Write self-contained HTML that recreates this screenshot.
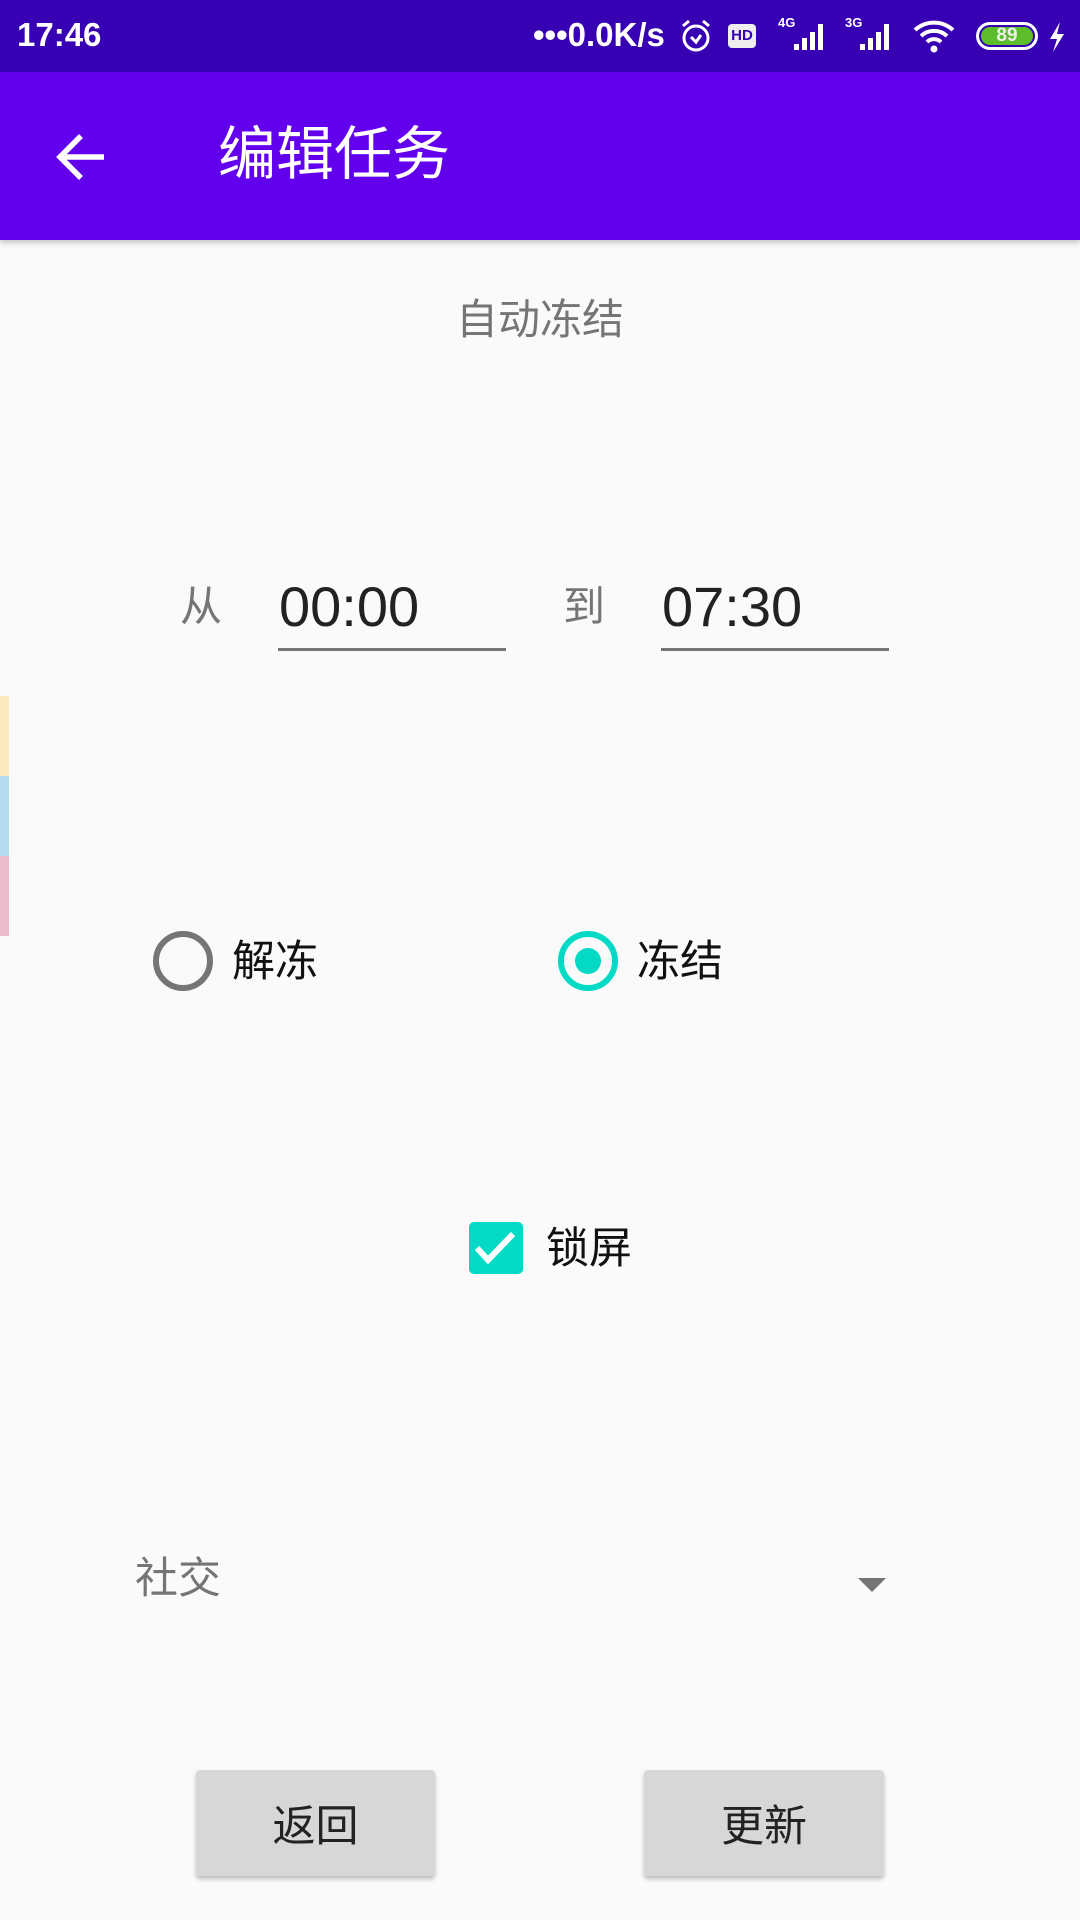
<!DOCTYPE html>
<html><head><meta charset="utf-8"><style>
*{margin:0;padding:0;box-sizing:border-box}
body{width:1080px;height:1920px;background:#FAFAFA;position:relative;overflow:hidden;font-family:"Liberation Sans","Noto Sans CJK SC",sans-serif}
.a{position:absolute;white-space:nowrap}
.sb{left:0;top:0;width:1080px;height:72px;background:#3700B3;color:#fff}
.ab{left:0;top:72px;width:1080px;height:168px;background:#6200EE;box-shadow:0 3px 5px rgba(0,0,0,.2)}
.btn{background:#D6D7D7;border-radius:4px;box-shadow:0 3px 4px rgba(0,0,0,.25);font-size:43px;color:#222;display:flex;align-items:center;justify-content:center}
</style></head><body>
<div class="a sb">
 <div class="a" style="left:17px;top:16px;font-size:33px;font-weight:bold;">17:46</div>
 <div class="a" style="left:533px;top:16px;font-size:33px;font-weight:bold;">•••0.0K/s</div>
 <svg class="a" style="left:678px;top:18px" width="36" height="36" viewBox="0 0 36 36"><circle cx="18" cy="20" r="12" fill="none" stroke="#fff" stroke-width="3"/><path d="M13 19l5 5 5-7M5 8l6-5M31 8l-6-5" stroke="#fff" stroke-width="3" fill="none"/></svg>
 <div class="a" style="left:728px;top:24px;width:28px;height:24px;background:#eee;border-radius:4px;color:#3700B3;font-size:15px;font-weight:bold;text-align:center;line-height:24px">HD</div>
 <div class="a" style="left:778px;top:15px;font-size:13px;font-weight:bold">4G</div>
 <svg class="a" style="left:790px;top:20px" width="40" height="32"><path d="M4 30h5v-6H4zM12 30h5V18h-5zM20 30h5V12h-5zM28 30h5V4h-5z" fill="#fff"/></svg>
 <div class="a" style="left:845px;top:15px;font-size:13px;font-weight:bold">3G</div>
 <svg class="a" style="left:856px;top:20px" width="40" height="32"><path d="M4 30h5v-6H4zM12 30h5V18h-5zM20 30h5V12h-5zM28 30h5V4h-5z" fill="#fff"/></svg>
 <svg class="a" style="left:912px;top:18px" width="46" height="36" viewBox="0 0 46 36"><path d="M3 12a28 28 0 0 1 38 0M9 18a19 19 0 0 1 26 0M15 24a10 10 0 0 1 14 0" stroke="#fff" stroke-width="4" fill="none"/><circle cx="22" cy="31" r="3.5" fill="#fff"/></svg>
 <div class="a" style="left:976px;top:22px;width:62px;height:28px;border:3px solid #fff;border-radius:14px;padding:2px"><div style="width:100%;height:100%;background:#5BBE2A;border-radius:10px;font-size:19px;font-weight:bold;text-align:center;line-height:18px;color:#eee">89</div></div>
 <svg class="a" style="left:1046px;top:20px" width="22" height="34"><path d="M14 2L4 19h7l-4 13 11-18h-7z" fill="#fff"/></svg>
</div>
<div class="a ab">
 <svg class="a" style="left:54px;top:58px" width="54" height="54" viewBox="0 0 54 54"><path d="M50 27H8M27 6L6 27l21 21" stroke="#fff" stroke-width="5.5" fill="none"/></svg>
 <div class="a" style="left:218px;top:48px;font-size:58px;color:#fff;line-height:70px">编辑任务</div>
</div>
<div class="a" style="left:0;top:295px;width:1080px;text-align:center;font-size:42px;color:#757575;line-height:50px">自动冻结</div>
<div class="a" style="left:180px;top:582px;font-size:42px;color:#757575;line-height:50px">从</div>
<div class="a" style="left:279px;top:575px;font-size:56px;color:#222;line-height:64px">00:00</div>
<div class="a" style="left:278px;top:648px;width:228px;height:3px;background:#757575"></div>
<div class="a" style="left:563px;top:582px;font-size:42px;color:#757575;line-height:50px">到</div>
<div class="a" style="left:662px;top:575px;font-size:56px;color:#222;line-height:64px">07:30</div>
<div class="a" style="left:661px;top:648px;width:228px;height:3px;background:#757575"></div>
<div class="a" style="left:0;top:696px;width:9px;height:80px;background:#FDE9BE"></div>
<div class="a" style="left:0;top:776px;width:9px;height:80px;background:#B2DAF1"></div>
<div class="a" style="left:0;top:856px;width:9px;height:80px;background:#ECBACD"></div>
<div class="a" style="left:153px;top:931px;width:60px;height:60px;border:6px solid #757575;border-radius:50%"></div>
<div class="a" style="left:232px;top:937px;font-size:43px;color:#111;line-height:50px">解冻</div>
<div class="a" style="left:558px;top:931px;width:60px;height:60px;border:6px solid #03DAC5;border-radius:50%"></div>
<div class="a" style="left:575px;top:948px;width:26px;height:26px;background:#03DAC5;border-radius:50%"></div>
<div class="a" style="left:637px;top:937px;font-size:43px;color:#111;line-height:50px">冻结</div>
<div class="a" style="left:469px;top:1222px;width:54px;height:52px;background:#03DAC5;border-radius:5px"></div>
<svg class="a" style="left:469px;top:1222px" width="54" height="52"><path d="M8 26l11 12 25-26" stroke="#fff" stroke-width="6" fill="none"/></svg>
<div class="a" style="left:546px;top:1224px;font-size:43px;color:#111;line-height:50px">锁屏</div>
<div class="a" style="left:135px;top:1554px;font-size:43px;color:#757575;line-height:50px">社交</div>
<svg class="a" style="left:856px;top:1576px" width="32" height="18"><path d="M2 2h28L16 16z" fill="#757575"/></svg>
<div class="a btn" style="left:196px;top:1770px;width:239px;height:106px">返回</div>
<div class="a btn" style="left:644px;top:1770px;width:240px;height:106px">更新</div>
</body></html>
